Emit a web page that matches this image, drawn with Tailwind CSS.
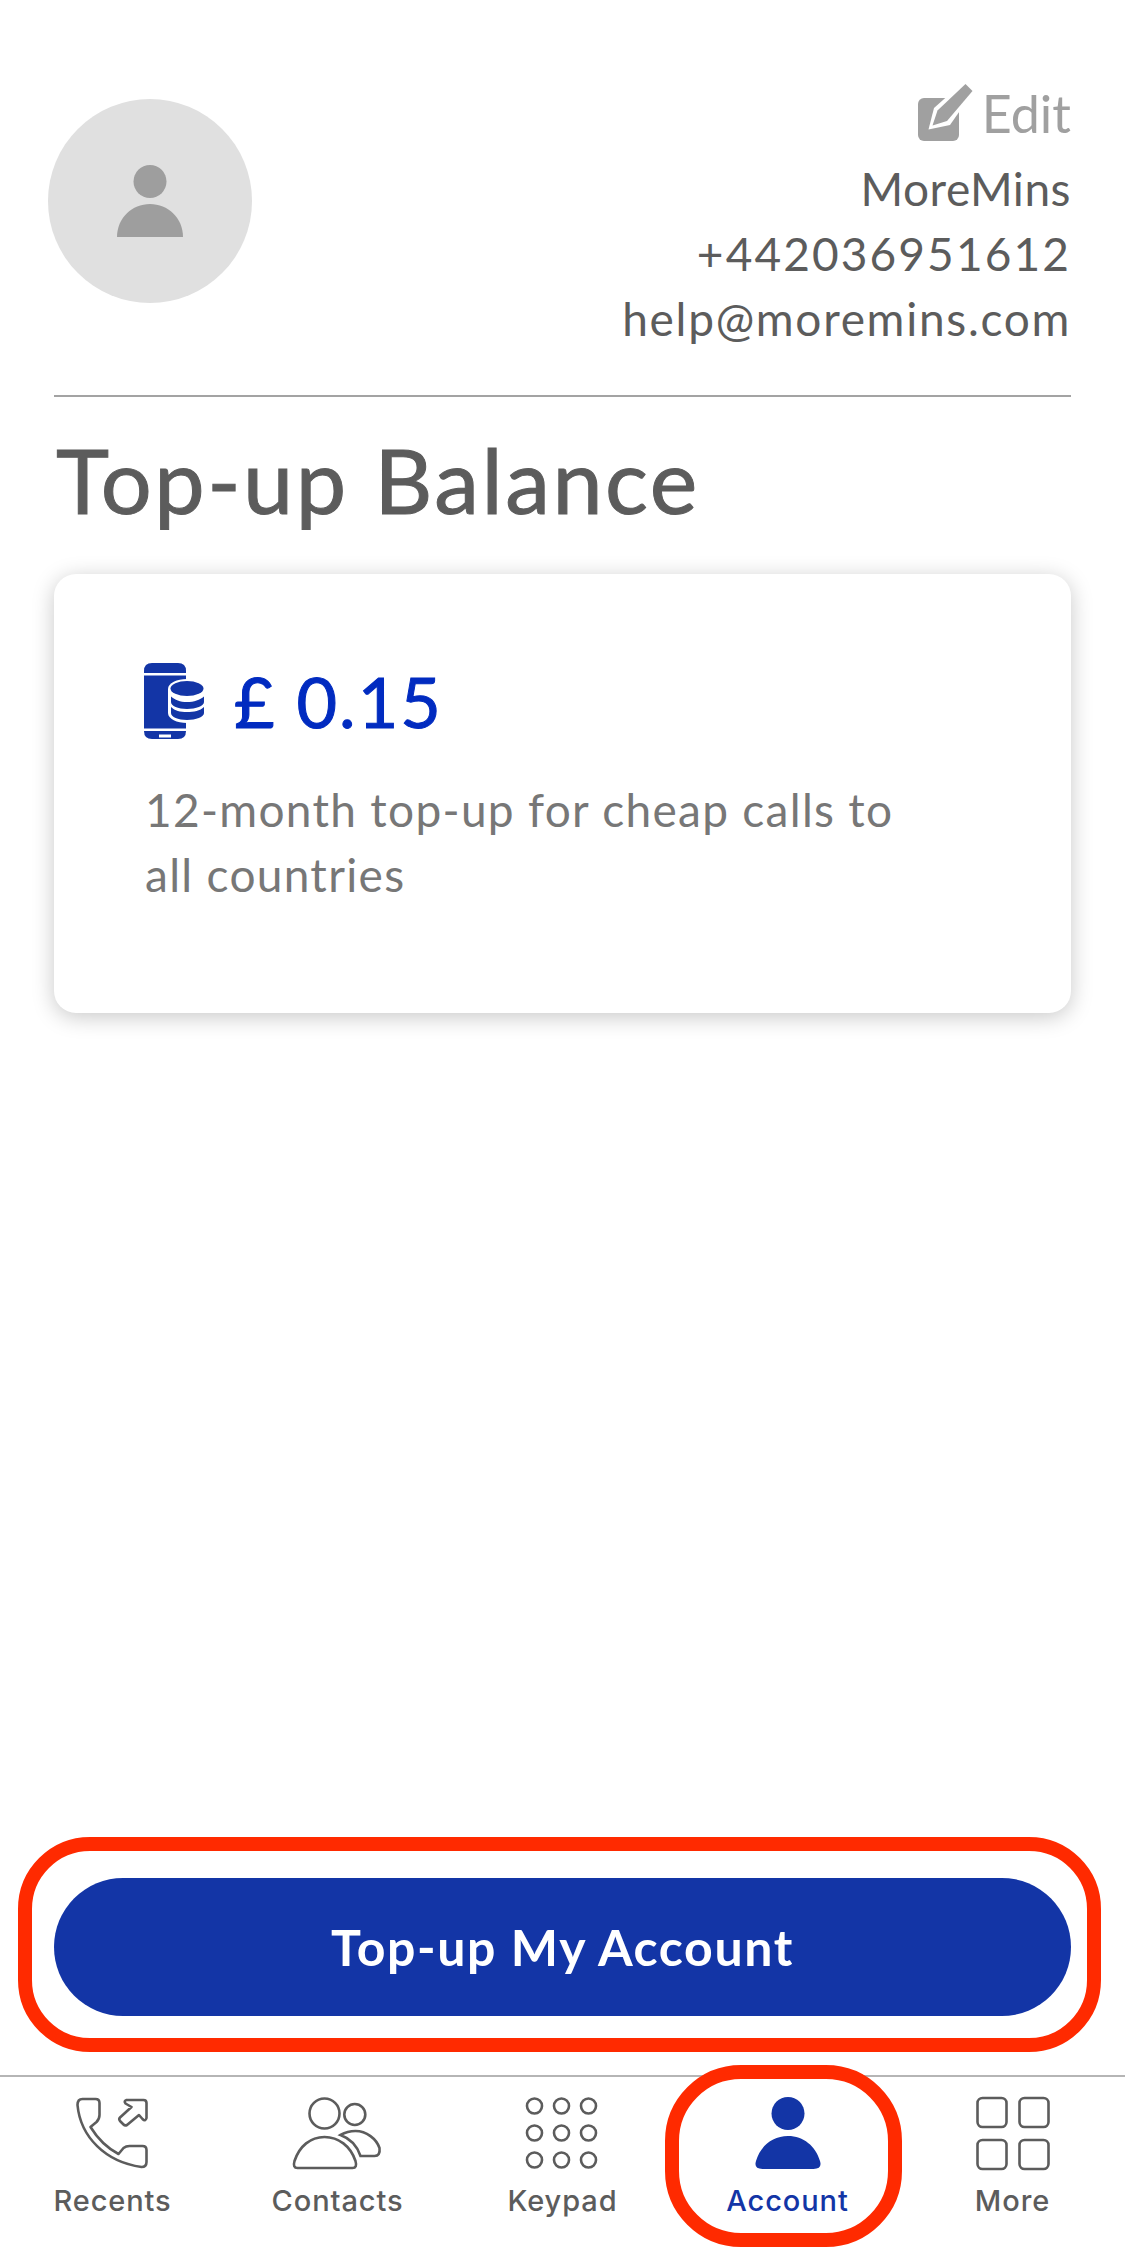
<!doctype html>
<html><head><meta charset="utf-8"><script src="https://cdn.jsdelivr.net/npm/@tailwindcss/browser@4"></script></head>
<body class="bg-white">
<div class="relative flex h-[2250px] w-[1125px] flex-col overflow-hidden bg-white font-['Lato',sans-serif] text-[#5c5c5c]">
  <header class="flex items-start justify-between pl-[48px] pr-[54px] pt-[84px]">
    <div class="mt-[15px] flex h-[204px] w-[204px] items-center justify-center rounded-full bg-[#e0e0e0]">
      <svg class="h-[204px] w-[204px]" viewBox="48 99 204 204"><circle cx="150" cy="181.5" r="16.5" fill="#9e9e9e"/><path d="M117 237C117 218 132 204 150 204C168 204 183 218 183 237Z" fill="#9e9e9e"/></svg>
    </div>
    <div class="flex flex-col items-end text-right text-[46px] leading-[65px]">
      <div class="flex h-[58px] items-center gap-[9px] text-[52px] text-[#a0a0a0]">
        <svg class="h-[58px] w-[56px]" viewBox="918 84 56 58">
          <rect x="919" y="98" width="41" height="43" rx="6" fill="#a0a0a0"/>
          <path d="M929.5 129.500L935 108L962 84H974V92L951 125Z" fill="#fff"/>
          <path d="M933.500 125.500L938.500 110.500L966.500 84L973.500 91L948 121Z" fill="#a0a0a0"/>
        </svg>
        <span>Edit</span>
      </div>
      <div class="mt-[14px] tracking-[0.5px]">MoreMins</div>
      <div class="tracking-[2.1px]">+442036951612</div>
      <div class="tracking-[1.7px]">help@moremins.com</div>
    </div>
  </header>
  <main class="flex flex-1 flex-col px-[54px]">
    <div class="mt-[44px] h-[2px] bg-[#a3a3a3]"></div>
    <h1 class="ml-[2px] mt-[29px] text-[90px] leading-[106px] tracking-[2.5px] text-[#5c5c5c] [-webkit-text-stroke:1px_#5c5c5c]">Top-up Balance</h1>
    <section class="mt-[42px] h-[439px] rounded-[22px] bg-white px-[90px] pt-[87px] shadow-[0_4px_22px_rgba(0,0,0,0.22)]">
      <div class="flex items-center gap-[30px]">
        <svg class="h-[76px] w-[60px]" viewBox="144 664 60 76">
          <path d="M152 664H178Q186 664 186 672V732Q186 740 178 740H152Q144 740 144 732V672Q144 664 152 664Z" fill="#1335a6"/>
          <rect x="144" y="674" width="42" height="2.5" fill="#fff"/><rect x="144" y="729.5" width="42" height="2.5" fill="#fff"/><rect x="159" y="735.5" width="12" height="3" fill="#fff"/>
          <path d="M168 690C168 684 177 680 187 680C197 680 206 684 206 690V714C206 720 197 724 187 724C177 724 168 720 168 714Z" fill="#fff"/>
          <path d="M171 697.5V703C171 707 178 710 187 710C196 710 204 707 204 703V697.5C200 701 194 703 187 703C180 703 175 701 171 697.5Z" fill="#1335a6"/>
          <path d="M171 708V714C171 718 178 721 187 721C196 721 204 718 204 714V708C200 712 194 713 187 713C180 713 175 712 171 708Z" fill="#1335a6"/>
          <ellipse cx="187" cy="689.5" rx="16.5" ry="7.5" fill="#1335a6"/>
        </svg>
        <span class="text-[70px] leading-[80px] tracking-[2px] text-[#012bc0] [-webkit-text-stroke:1px_#012bc0]">£ 0.15</span>
      </div>
      <p class="ml-[1px] mt-[36px] w-[790px] text-[46px] leading-[65px] tracking-[1.3px] text-[#777777]">12-month top-up for cheap calls to all countries</p>
    </section>
    <div class="flex-1"></div>
    <button class="mb-[59px] flex h-[138px] items-center justify-center rounded-full bg-[#1335a6] text-[50px] font-bold tracking-[1.6px] text-white">Top-up My Account</button>
  </main>
  <nav class="grid h-[175px] grid-cols-5 border-t-2 border-[#b5b5b5] font-['Inter',sans-serif] text-[29px] font-medium tracking-[0.9px] text-[#5c5c5c]">
    <div class="flex flex-col items-center pt-[19px]">
      <svg class="h-[76px] w-[84px]" viewBox="70.500 2096 84 76" fill="none" stroke="#5c5c5c" stroke-width="2.6" stroke-linejoin="round">
        <path d="M82 2099H95Q99 2099 99 2103V2115Q99 2119 96 2122L90 2127Q101 2145 118 2154L123 2148Q125.500 2146 129 2146H142Q146 2146 146 2150V2162Q146 2167 141 2167C105 2162 80 2137 77 2105Q77 2099 82 2099Z"/>
        <path d="M126 2100H143Q146 2100 146 2103V2118Q145 2122 142 2119L138.500 2115L126.500 2125Q124.500 2126 123 2124.500L119.500 2121Q118 2119 119.500 2117.500L131 2107L125 2103.500Q123 2101 126 2100Z"/>
      </svg>
      <span class="mt-[7px]">Recents</span>
    </div>
    <div class="flex flex-col items-center pt-[19px]">
      <svg class="h-[76px] w-[92px]" viewBox="291.500 2096 92 76" fill="none" stroke="#5c5c5c" stroke-width="2.6">
        <circle cx="324" cy="2113.500" r="15"/><circle cx="354.300" cy="2114.500" r="10.500"/>
        <path d="M297 2168H352Q357 2168 355 2161C350 2146 338 2137 324 2137C310 2137 299 2146 294 2161Q292 2168 297 2168Z"/>
        <path d="M340 2135Q347 2131 355 2131C366 2131 376 2139 379 2148Q380 2156 374 2156H360C357 2147 351 2139 340 2135Z"/>
      </svg>
      <span class="mt-[7px]">Contacts</span>
    </div>
    <div class="flex flex-col items-center pt-[19px]">
      <svg class="h-[76px] w-[76px]" viewBox="524.500 2096 76 76" fill="none" stroke="#5c5c5c" stroke-width="2.6">
        <circle cx="534" cy="2106" r="7.500"/><circle cx="561" cy="2106" r="7.500"/><circle cx="588" cy="2106" r="7.500"/>
        <circle cx="534" cy="2133" r="7.500"/><circle cx="561" cy="2133" r="7.500"/><circle cx="588" cy="2133" r="7.500"/>
        <circle cx="534" cy="2160" r="7.500"/><circle cx="561" cy="2160" r="7.500"/><circle cx="588" cy="2160" r="7.500"/>
      </svg>
      <span class="mt-[7px]">Keypad</span>
    </div>
    <div class="flex flex-col items-center pt-[19px] text-[#1335a6]">
      <svg class="h-[76px] w-[72px]" viewBox="751.500 2096 72 76" fill="#1335a6">
        <ellipse cx="787.500" cy="2113.500" rx="16.500" ry="16.500"/>
        <path d="M762 2169Q753 2169 755.500 2161C760 2146 772 2136 787.500 2136C803 2136 815 2146 819.500 2161Q822 2169 813 2169Z"/>
      </svg>
      <span class="mt-[7px]">Account</span>
    </div>
    <div class="flex flex-col items-center pt-[19px]">
      <svg class="h-[76px] w-[76px]" viewBox="974.500 2096 76 76" fill="none" stroke="#5c5c5c" stroke-width="2.6">
        <rect x="977" y="2098" width="29" height="29" rx="5"/><rect x="1019" y="2098" width="29" height="29" rx="5"/>
        <rect x="977" y="2140" width="29" height="29" rx="5"/><rect x="1019" y="2140" width="29" height="29" rx="5"/>
      </svg>
      <span class="mt-[7px]">More</span>
    </div>
  </nav>
  <div class="absolute left-[18px] top-[1837px] h-[215px] w-[1083px] rounded-[72px] border-[14px] border-[#ff2a00]"></div>
  <div class="absolute left-[665px] top-[2065px] h-[182px] w-[237px] rounded-[76px] border-[14px] border-[#ff2a00]"></div>
</div>
</body></html>
